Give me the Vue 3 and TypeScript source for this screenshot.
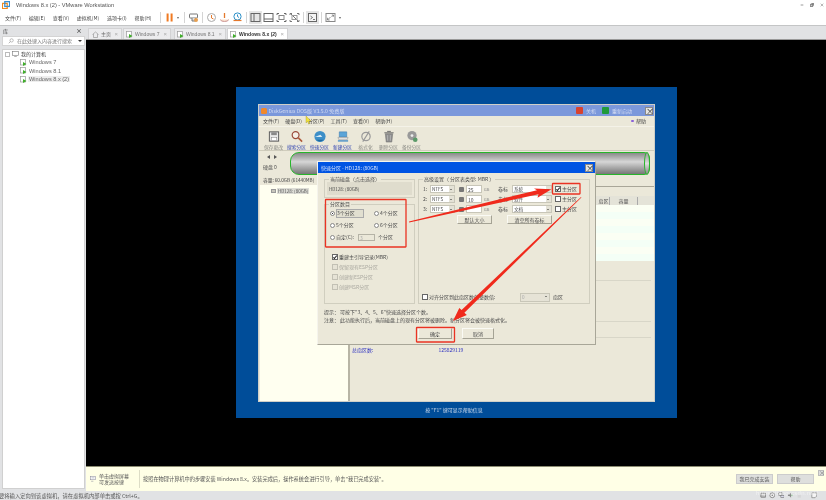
<script setup lang="ts">
const menus = ['文件(F)', '编辑(E)', '查看(V)', '虚拟机(M)', '选项卡(I)', '帮助(H)']
const vmNames = ['Windows 7', 'Windows 8.1', 'Windows 8.x (2)']
const dgMenus = ['文件(F)', '硬盘(D)', '分区(P)', '工具(T)', '查看(V)', '帮助(H)']
const dgTools = [
  { label: '保存更改', kind: 'save', on: false },
  { label: '搜索分区', kind: 'search', on: true },
  { label: '快速分区', kind: 'quick', on: true },
  { label: '新建分区', kind: 'new', on: true },
  { label: '格式化', kind: 'format', on: false },
  { label: '删除分区', kind: 'del', on: false },
  { label: '备份分区', kind: 'backup', on: false },
]
const radios = ['3个分区', '4个分区', '5个分区', '6个分区']
const disabledChecks = ['保留现有ESP分区', '创建新ESP分区', '创建MSR分区']
const partRows = [
  { n: '1:', size: '25', label: '系统', checked: true },
  { n: '2:', size: '10', label: '软件', checked: false },
  { n: '3:', size: '', label: '文档', checked: false },
]
const tableRows = [0, 1, 2, 3, 4, 5, 6, 7]
</script>

<template>
  <div class="app">
    <header class="titlebar">
      <svg class="logo" viewBox="0 0 10 10">
        <rect x="0.5" y="3" width="6" height="6.5" fill="none" stroke="#f08a1d" stroke-width="1.6" />
        <rect x="3.5" y="0.8" width="6" height="6" fill="none" stroke="#3a8fd0" stroke-width="1.6" />
      </svg>
      <span class="app-title">Windows 8.x (2) - VMware Workstation</span>
      <div class="winctl">
        <svg viewBox="0 0 6 6"><path d="M1 3h4" stroke="#666" stroke-width="1" /></svg>
        <svg viewBox="0 0 6 6"><path d="M2 .5h3.5v3.5M.5 2h3.5v3.5H.5z" fill="#ccc" stroke="#444" stroke-width=".9" /></svg>
        <svg viewBox="0 0 6 6"><path d="M1 1l4 4M5 1L1 5" stroke="#888" stroke-width=".9" /></svg>
      </div>
    </header>

    <div class="menubar">
      <nav class="menus"><span v-for="m in menus" :key="m">{{ m }}</span></nav>
      <div class="tools">
        <i class="sep"></i>
        <span class="ti"><svg viewBox="0 0 13 13"><path d="M3.6 2.5h2v8h-2zM7.6 2.5h2v8h-2z" fill="#f07a22" /></svg></span>
        <span class="caret pause-caret"></span>
        <i class="sep"></i>
        <span class="ti"><svg viewBox="0 0 13 13"><rect x="2.5" y="3" width="8" height="4" rx=".5" fill="#fff" stroke="#777" /><path d="M5 7v3h3.500V7" fill="#ddd" stroke="#777" /><circle cx="9" cy="9" r="2" fill="#e8a050" /></svg></span>
        <i class="sep"></i>
        <span class="ti"><svg viewBox="0 0 13 13"><circle cx="6.500" cy="6.500" r="4" fill="#fff" stroke="#aaa" /><path d="M6.500 4v3l2 1" fill="none" stroke="#e4782c" /></svg></span>
        <span class="ti"><svg viewBox="0 0 13 13"><path d="M6.500 2v5" stroke="#e4782c" stroke-width="1.300" /><path d="M2.500 8.500a4 2 0 0 0 8 0" fill="#fbe0cc" stroke="#c99" /></svg></span>
        <span class="ti"><svg viewBox="0 0 13 13"><circle cx="6.500" cy="5.500" r="3.600" fill="#fff" stroke="#2a8fc8" /><path d="M6.500 3.500v2l1.500 1" fill="none" stroke="#2a8fc8" /><path d="M2.500 9.500h8" stroke="#e4782c" stroke-width="1.200" /></svg></span>
        <i class="sep"></i>
        <span class="ti hl"><svg viewBox="0 0 13 13"><rect x="2" y="2.500" width="9" height="8" fill="none" stroke="#666" /><path d="M5 2.500v8" stroke="#666" /></svg></span>
        <span class="ti"><svg viewBox="0 0 13 13"><rect x="2" y="2.500" width="9" height="8" fill="none" stroke="#666" /><path d="M2 8h9" stroke="#666" /></svg></span>
        <span class="ti"><svg viewBox="0 0 13 13"><path d="M2 4V2.500h2M9 2.500h2V4M11 9v1.500H9M4 10.500H2V9" fill="none" stroke="#666" /><rect x="4" y="4.500" width="5" height="4" fill="none" stroke="#888" /></svg></span>
        <span class="ti"><svg viewBox="0 0 13 13"><path d="M2 4V2.500h2M9 2.500h2V4M11 9v1.500H9M4 10.500H2V9M3 3l7 7" fill="none" stroke="#777" /><rect x="4" y="4.500" width="5" height="4" fill="none" stroke="#999" /></svg></span>
        <i class="sep"></i>
        <span class="ti hl"><svg viewBox="0 0 13 13"><rect x="2.500" y="2.500" width="8" height="8" fill="#f4f4f4" stroke="#666" /><path d="M4.500 5l2 1.500-2 1.500M7 8.500h2" fill="none" stroke="#555" stroke-width=".8" /></svg></span>
        <i class="sep"></i>
        <span class="ti"><svg viewBox="0 0 13 13"><rect x="2" y="2.500" width="9" height="8" fill="#fff" stroke="#888" /><path d="M3.500 9l3-3M3.500 6.800V9h2.200M9.500 4l-2 2M7.800 4h1.700v1.700" fill="none" stroke="#777" stroke-width=".8" /></svg></span>
        <span class="caret"></span>
      </div>
    </div>

    <div class="workspace">
      <aside class="library">
        <div class="lib-head"><span>库</span><span class="lib-x">×</span></div>
        <div class="search">
          <svg viewBox="0 0 8 8"><circle cx="4.800" cy="3.200" r="2.200" fill="none" stroke="#888" stroke-width=".7" /><path d="M3.200 4.800L1 7" stroke="#888" stroke-width=".8" /></svg>
          <span>在此处键入内容进行搜索</span>
          <i class="search-caret"></i>
        </div>
        <div class="tree">
          <div class="tree-root">
            <i class="expander"></i>
            <svg class="pc" viewBox="0 0 8 7"><rect x=".5" y=".5" width="7" height="4.500" fill="#fff" stroke="#777" stroke-width=".7" /><path d="M2.500 6.500h3" stroke="#777" stroke-width=".7" /></svg>
            <span>我的计算机</span>
          </div>
          <div v-for="(v, i) in vmNames" :key="v" class="tree-vm" :class="{ current: i === 2 }">
            <svg class="vm-ico" viewBox="0 0 7 7"><rect x=".5" y=".5" width="5" height="5.500" fill="#fff" stroke="#999" stroke-width=".7" /><path d="M3 3l3.500 2L3 7z" fill="#3fae2a" /></svg>
            <span>{{ v }}</span>
          </div>
        </div>
      </aside>

      <section class="main">
        <div class="tabs">
          <div class="tab home">
            <svg viewBox="0 0 7 7"><path d="M.5 3.500L3.500 1l3 2.500M1.500 3v3.500h4V3" fill="none" stroke="#999" stroke-width=".7" /></svg>
            <span>主页</span><b>×</b>
          </div>
          <div v-for="(v, i) in vmNames" :key="v" class="tab" :class="{ active: i === 2, w7: i === 0, w81: i === 1, w8x: i === 2 }">
            <svg viewBox="0 0 7 7"><rect x=".5" y=".5" width="5" height="5.500" fill="#fff" stroke="#999" stroke-width=".7" /><path d="M3 3l3.500 2L3 7z" fill="#3fae2a" /></svg>
            <span>{{ v }}</span><b>×</b>
          </div>
        </div>

        <div class="stage">
          <div class="guest">
            <div class="dg">
              <div class="dg-title">
                <i class="dg-logo"></i>
                <span class="dg-name">DiskGenius DOS版 V3.5.0 免费版</span>
                <i class="pw red"></i><span class="pw-text">关机</span>
                <i class="pw green"></i><span class="pw-text">重新启动</span>
                <span class="x-box dg-x">×</span>
              </div>
              <div class="dg-menu">
                <span v-for="m in dgMenus" :key="m">{{ m }}</span>
                <span class="dg-help"><i></i>帮助</span>
              </div>
              <div class="dg-tools">
                <div v-for="t in dgTools" :key="t.label" class="dg-tool" :class="{ on: t.on }">
                  <svg viewBox="0 0 14 14">
                    <g v-if="t.kind === 'save'"><rect x="2" y="2" width="10" height="10" fill="#e8e8e8" stroke="#555" /><rect x="4" y="2.500" width="6" height="3" fill="#888" /><rect x="4" y="8" width="6" height="3.500" fill="#fff" stroke="#777" stroke-width=".5" /></g>
                    <g v-else-if="t.kind === 'search'"><circle cx="5.500" cy="5.500" r="3.700" fill="#f4efe6" stroke="#9a4a3a" stroke-width="1.300" /><path d="M8.500 8.500l4 4" stroke="#b05a3a" stroke-width="1.700" /></g>
                    <g v-else-if="t.kind === 'quick'"><circle cx="7" cy="7" r="6" fill="#3d8fc8" /><path d="M1.500 7.500h8l-2-2.500z" fill="#d6eaf5" /><path d="M3 10.500a6 6 0 0 0 8 0z" fill="#1f6aa0" /></g>
                    <g v-else-if="t.kind === 'new'"><path d="M3 2h8v5.500H3z" fill="#5aa4d8" stroke="#3a7bb0" stroke-width=".6" /><path d="M1.500 8h11l-1 2.500h-9z" fill="#e0e0e0" stroke="#888" stroke-width=".5" /><path d="M1.500 11h11v1.500h-11z" fill="#4a90c8" /></g>
                    <g v-else-if="t.kind === 'format'"><circle cx="7" cy="7" r="4.500" fill="none" stroke="#999" stroke-width="1.300" /><path d="M10.500 1.500L3.500 12.500" stroke="#999" stroke-width="1.200" /></g>
                    <g v-else-if="t.kind === 'del'"><path d="M3 4h8l-1 9H4z" fill="#8f8f8f" stroke="#666" stroke-width=".5" /><path d="M2 3h10M5 1.500h4" stroke="#666" /><path d="M5.500 5.500v6M8.500 5.500v6" stroke="#ccc" stroke-width=".6" /></g>
                    <g v-else><circle cx="7" cy="6" r="5" fill="#999" /><circle cx="7" cy="6" r="1.500" fill="#eee" /><circle cx="10.500" cy="10.500" r="2.500" fill="#5a9a68" /></g>
                  </svg>
                  <span>{{ t.label }}</span>
                </div>
              </div>
              <div class="diskrow">
                <div class="disk-nav">
                  <div class="arrows"><i class="al"></i><i class="ar"></i></div>
                  <span>硬盘 0</span>
                </div>
                <div class="cyl"><i class="cyl-end"></i></div>
              </div>
              <div class="capacity">容量: 60.0GB (61440MB)</div>
              <div class="dg-body">
                <div class="disk-tree">
                  <div class="tree-item"><i class="hd-ico"></i><span>HD128: (80GB)</span></div>
                </div>
                <div class="detail">
                  <div class="rule dark"></div>
                  <div class="th"><span class="c1">扇区</span><span class="c2">容量</span><span class="c3"></span></div>
                  <div class="tb"><div v-for="r in tableRows" :key="r" class="tr"></div></div>
                  <div class="rule l1"></div>
                  <div class="rule l2"></div>
                  <div class="rule l3"></div>
                  <div class="info"><span>总扇区数:</span><span class="val">125829119</span></div>
                </div>
              </div>

              <div class="dialog">
                <div class="dlg-title"><span>快速分区 - HD128: (80GB)</span><span class="x-box">×</span></div>
                <div class="dlg-cols">
                  <div class="dlg-left">
                    <fieldset class="fs fs-disk">
                      <legend>当前磁盘（点击选择）</legend>
                      <div class="disk-pick">HD128: (80GB)</div>
                    </fieldset>
                    <fieldset class="fs fs-count">
                      <legend>分区数目</legend>
                      <div class="radios">
                        <label v-for="(r, i) in radios" :key="r" class="radio" :class="{ sel: i === 0 }"><i></i><span>{{ r }}</span></label>
                        <label class="radio custom"><i></i><span>自定(C):</span><em class="spin">3</em><span>个分区</span></label>
                      </div>
                      <div class="checks">
                        <label class="chk"><i class="box ticked"></i><span>重建主引导记录(MBR)</span></label>
                        <label v-for="c in disabledChecks" :key="c" class="chk off"><i class="box"></i><span>{{ c }}</span></label>
                      </div>
                    </fieldset>
                  </div>
                  <fieldset class="fs fs-adv">
                    <legend>高级设置（ 分区表类型: MBR ）</legend>
                    <div class="adv">
                      <div v-for="p in partRows" :key="p.n" class="prow">
                        <span class="pnum">{{ p.n }}</span>
                        <span class="select">NTFS<i></i></span>
                        <span class="sz-ico"></span>
                        <span class="field sz">{{ p.size }}</span>
                        <span class="gb">GB</span>
                        <span class="lbl">卷标</span>
                        <span class="select combo">{{ p.label }}<i></i></span>
                        <i class="box pchk" :class="{ ticked: p.checked }"></i>
                        <span class="ptext">主分区</span>
                      </div>
                      <div class="adv-btns">
                        <span class="btn b-def">默认大小</span>
                        <span class="btn b-clr">清空所有卷标</span>
                      </div>
                      <div class="align">
                        <i class="box"></i>
                        <span class="align-t">对齐分区到此扇区数的整数倍:</span>
                        <span class="select a-sel dim">0<i></i></span>
                        <span>扇区</span>
                      </div>
                    </div>
                  </fieldset>
                </div>
                <p class="tip">提示： 可按下"3、4、5、6"快速选择分区个数。</p>
                <p class="tip">注意： 此功能执行后，当前磁盘上的现有分区将被删除。新分区将会被快速格式化。</p>
                <div class="dlg-btns">
                  <span class="btn ok">确定</span>
                  <span class="btn cancel">取消</span>
                </div>
              </div>
            </div>
            <div class="f1">按 "F1" 键可显示帮助信息</div>
          </div>
        </div>

        <div class="hint">
          <svg class="hint-ico" viewBox="0 0 8 8"><rect x=".5" y=".5" width="7" height="4.500" fill="#fff" stroke="#889" stroke-width=".7" /><path d="M1.500 7h3M2 2.500h4" stroke="#889" stroke-width=".7" /></svg>
          <div class="hint-a">单击虚拟屏幕<br />可发送按键</div>
          <i class="hint-div"></i>
          <div class="hint-b">按照在物理计算机中的步骤安装 Windows 8.x。安装完成后，操作系统会进行引导，单击"我已完成安装"。</div>
          <span class="hbtn first">我已完成安装</span>
          <span class="hbtn second">帮助</span>
          <span class="hclose">×</span>
        </div>
      </section>
    </div>

    <footer class="status">
      <span>要将输入定向到该虚拟机，请在虚拟机内部单击或按 Ctrl+G。</span>
      <div class="st-icons">
        <svg viewBox="0 0 8 8"><rect x="1" y="1.500" width="6" height="5" rx=".5" fill="#ddd" stroke="#666" stroke-width=".8" /><path d="M1 5h6" stroke="#666" stroke-width=".6" /></svg>
        <svg viewBox="0 0 8 8"><circle cx="4" cy="4" r="3" fill="#eee" stroke="#666" stroke-width=".8" /><circle cx="4" cy="4" r=".8" fill="#666" /></svg>
        <svg viewBox="0 0 8 8"><rect x="1" y="1" width="4" height="3" fill="#eee" stroke="#666" stroke-width=".7" /><rect x="3.500" y="4" width="4" height="3" fill="#dde" stroke="#666" stroke-width=".7" /></svg>
        <svg viewBox="0 0 8 8"><path d="M1 3h2l2-2v6L3 5H1z" fill="#888" /><path d="M6 3v2" stroke="#5a5" stroke-width=".8" /></svg>
        <svg class="faint" viewBox="0 0 8 8"><path d="M2 7V3h4v4z" fill="#ccc" /></svg>
        <svg class="last" viewBox="0 0 8 8"><path d="M1 1h6v4L5 7H1z" fill="#f4f4f4" stroke="#666" stroke-width=".7" /></svg>
      </div>
    </footer>

    <div class="watermark">https://blog.csdn.net/</div>

    <svg class="overlay" viewBox="0 0 826 500">
      <g fill="none" stroke="#ea3323" stroke-width="1.300">
        <rect x="325.500" y="199.500" width="80.500" height="47.500" rx=".5" />
        <rect x="552.500" y="183.500" width="27.500" height="10.500" rx=".5" />
        <rect x="416.500" y="327.500" width="38" height="14.500" rx=".5" />
      </g>
      <path fill="#f02a1c" d="M409 221.600L537 190.200 534 188.600 551.500 189.200 537.500 197.800 538.500 194.200 409.200 222.500Z" />
      <path fill="#f02a1c" d="M581 197L581.400 197.400 464.400 312.700 466.800 315 453 321 459.300 308 461.600 309.900Z" />
      <path d="M306 116l0 7 1.600-1.500 1.200 2.500 1-.5-1.100-2.400 2.300-.1z" fill="#f0e23c" stroke="#8a7a20" stroke-width=".3" />
    </svg>
  </div>
</template>

<style scoped>
.app {
  position: relative;
  width: 826px;
  height: 500px;
  overflow: hidden;
  display: flex;
  flex-direction: column;
  background: #e1e2e4;
  font-family: "Noto Sans CJK SC", "Liberation Sans", sans-serif;
  font-size: 5px;
  line-height: 6px;
  color: #444;
  filter: blur(0.3px);
}
i, em { font-style: normal; display: block; }
label { display: flex; align-items: center; }
p { margin: 0; }

.titlebar {
  height: 10px;
  background: #fff;
  display: flex;
  align-items: center;
  padding-left: 2px;
  flex: none;
}
.logo { width: 8px; height: 8px; }
.app-title {
  margin-left: 6px;
  font-family: "Liberation Sans", sans-serif;
  font-size: 5.7px;
  color: #555;
}
.winctl { margin-left: auto; display: flex; gap: 6px; padding-right: 2px; }
.winctl svg { width: 4px; height: 4px; }

.menubar {
  height: 15px;
  background: #fff;
  border-bottom: 1px solid #c4c5c6;
  display: flex;
  align-items: center;
  flex: none;
}
.menus { width: 158px; padding-left: 5px; display: flex; gap: 7.7px; box-sizing: border-box; color: #444; }
.tools { display: flex; align-items: center; height: 13px; }
.sep { width: 1px; height: 11px; background: #d4d4d4; margin: 0 2px; }
.ti { width: 13px; height: 13px; display: block; }
.ti svg { width: 13px; height: 13px; display: block; }
.ti.hl { background: #e6e6e6; }
.caret {
  width: 0; height: 0;
  border-left: 1.500px solid transparent;
  border-right: 1.500px solid transparent;
  border-top: 2px solid #666;
  margin: 0 1.500px;
}
.pause-caret { margin: 0 3.500px 0 .5px; }

.workspace { flex: 1; display: flex; min-height: 0; }
.library { width: 86px; flex: none; padding: 0 1px 2px 2px; box-sizing: border-box; display: flex; flex-direction: column; }
.lib-head { height: 10px; display: flex; align-items: center; justify-content: space-between; padding: 0 3px 0 1px; }
.lib-x { font-size: 6px; font-weight: 700; color: #555; }
.search {
  height: 10px;
  background: #fff;
  border: 1px solid #d4d4d4;
  box-sizing: border-box;
  display: flex;
  align-items: center;
  padding: 0 2px 0 5px;
  color: #777;
}
.search svg { width: 6px; height: 6px; margin-right: 3px; }
.search-caret {
  margin-left: auto;
  border-left: 2px solid transparent;
  border-right: 2px solid transparent;
  border-top: 2.500px solid #333;
}
.tree {
  flex: 1;
  margin-top: 3px;
  background: #fff;
  border: 1px solid #d0d0d0;
}
.tree-root { height: 8px; display: flex; align-items: center; padding-left: 2px; }
.expander { width: 3px; height: 3px; border: 1px solid #bbb; margin-right: 2px; }
.pc { width: 7px; height: 6px; margin-right: 2px; }
.tree-vm { height: 8.600px; display: flex; align-items: center; padding-left: 17px; color: #666; font-family: "Liberation Sans", sans-serif; font-size: 5.600px; }
.tree-vm span { padding: 0 1px; }
.tree-vm.current span { background: #eee; }
.vm-ico { width: 7px; height: 7px; margin-right: 1px; }

.main { flex: 1; min-width: 0; display: flex; flex-direction: column; }
.tabs {
  height: 14px;
  flex: none;
  display: flex;
  align-items: flex-end;
  padding-left: 2px;
  gap: 1px;
  box-sizing: border-box;
  border-bottom: 1px solid #999;
}
.tab {
  height: 11px;
  background: #ececee;
  border: 1px solid #d2d2d4;
  border-bottom: 0;
  box-sizing: border-box;
  display: flex;
  align-items: center;
  padding: 0 2px 0 2px;
  font-family: "Liberation Sans", "Noto Sans CJK SC", sans-serif;
  font-size: 5px;
  color: #777;
}
.tab svg { width: 7px; height: 7px; margin-right: 2px; flex: none; }
.tab b { margin-left: auto; margin-right: 1px; font-size: 6px; font-weight: 400; color: #aaa; }
.tab.home { width: 34px; color: #666; padding-left: 3px; }
.tab.w7 { width: 48px; }
.tab.w81 { width: 52px; margin-left: 2px; }
.tab.w8x { width: 61px; }
.tab.active { background: #fff; color: #333; font-weight: 700; }
.tab.active b { font-weight: 400; }

.stage { flex: 1; min-height: 0; background: #000; padding: 47px 0 0 150px; box-sizing: border-box; }
.guest {
  width: 441px;
  height: 331px;
  background: #004d99;
  padding: 17px 22px 0;
  box-sizing: border-box;
  color: #555;
}
.f1 { text-align: center; color: #cfdcec; margin-top: 5px; padding-right: 5px; }

.dg {
  position: relative;
  height: 298px;
  background: #ebe8d9;
  border: 1px solid #cfcfc8;
  box-sizing: border-box;
  display: flex;
  flex-direction: column;
}
.dg-title {
  height: 11px;
  flex: none;
  background: #7b98db;
  display: flex;
  align-items: center;
  padding-left: 2px;
  color: #d4dcf2;
}
.dg-logo { width: 6px; height: 6px; border-radius: 1.500px; background: #f0882a; margin-right: 1.500px; }
.dg-name { letter-spacing: .1px; }
.pw { width: 7px; height: 7px; border-radius: 1px; margin-right: 3px; }
.pw.red { background: #d8432f; margin-left: auto; }
.pw.green { background: #1f9a3a; margin-left: 6px; }
.pw-text { color: #d4dcf2; }
.x-box {
  width: 8px;
  height: 8px;
  border: 1px solid #888;
  box-sizing: border-box;
  background: #e6e6e2;
  color: #222;
  font-size: 8px;
  line-height: 5px;
  text-align: center;
  display: block;
}
.dg-x { margin-left: 13px; margin-right: 1px; }
.dg-menu { height: 10px; flex: none; display: flex; align-items: center; padding-left: 4px; gap: 6px; color: #444; }
.dg-help { margin-left: auto; margin-right: 8px; display: flex; align-items: center; gap: 2px; }
.dg-help i { width: 2.500px; height: 2.500px; border-radius: 50%; background: #8a60d8; }
.dg-tools {
  height: 25px;
  flex: none;
  box-sizing: border-box;
  border-top: 1px solid #f4f2e8;
  border-bottom: 1px solid #cfccbc;
  display: flex;
  padding-left: 3px;
}
.dg-tool { width: 23px; display: flex; flex-direction: column; align-items: center; padding-top: 3px; color: #8a8a84; font-size: 4.800px; }
.dg-tool svg { width: 14px; height: 14px; }
.dg-tool span { margin-top: 1px; white-space: nowrap; }
.dg-tool.on { color: #2b3fb0; }
.diskrow { height: 24px; flex: none; display: flex; padding-top: 1px; box-sizing: border-box; }
.disk-nav { width: 31px; padding-left: 4px; box-sizing: border-box; flex: none; }
.arrows { display: flex; gap: 4px; height: 9px; padding: 2.500px 0 0 4px; box-sizing: border-box; }
.arrows i { width: 0; height: 0; border-top: 2.500px solid transparent; border-bottom: 2.500px solid transparent; }
.al { border-right: 3px solid #555; }
.ar { border-left: 3px solid #555; }
.disk-nav span { display: block; margin-top: 3px; }
.cyl {
  position: relative;
  width: 360px;
  height: 23px;
  box-sizing: border-box;
  border: 1.300px solid #27b52a;
  border-radius: 9px 6px 6px 9px;
  background: linear-gradient(#8a8a8a, #d6d6d6 42%, #a8a8a8 70%, #777);
}
.cyl-end {
  position: absolute;
  right: -1px;
  top: -1px;
  width: 6px;
  height: 23px;
  box-sizing: border-box;
  border: 1.300px solid #27b52a;
  border-radius: 50%;
  background: linear-gradient(#999, #ddd 50%, #888);
}
.capacity { height: 10px; flex: none; padding-left: 4px; display: flex; align-items: center; color: #444; font-size: 4.700px; }
.dg-body { flex: 1; min-height: 0; display: flex; }
.disk-tree {
  width: 88px;
  flex: none;
  margin-left: 1px;
  background: #fffff0;
  border-right: 2px solid #b8b5a5;
  padding-top: 3px;
}
.tree-item { margin-left: 11px; height: 6px; display: flex; align-items: center; color: #555; font-size: 4.500px; }
.hd-ico { width: 5px; height: 4px; background: #c8c6bc; border: .5px solid #999; box-sizing: border-box; margin-right: 1px; flex: none; }
.tree-item span { background: #ddddd6; padding: 0 1px; white-space: nowrap; }
.detail { flex: 1; min-width: 0; display: flex; flex-direction: column; padding-top: 1px; }
.rule { height: 1px; background: #d8d6c8; flex: none; margin-right: 3px; }
.rule.dark { background: #a9a698; margin-right: 0; height: 1px; }
.th {
  margin-top: 9px;
  height: 9px;
  flex: none;
  background: #e4e3d8;
  display: flex;
  justify-content: flex-end;
  align-items: center;
  color: #555;
}
.th span { height: 8px; display: flex; align-items: center; justify-content: center; box-sizing: border-box; }
.c1 { width: 12px; border-right: 1px solid #aaa; }
.c2 { width: 28px; border-right: 1px solid #aaa; }
.c3 { width: 16px; }
.tr { height: 7px; background: #fbfff4; }
.tr:nth-child(even) { background: #f4fff6; }
.rule.l1 { margin-top: 19px; }
.rule.l2 { margin-top: 40px; }
.rule.l3 { margin-top: 15px; }
.info { margin-top: 9px; padding-left: 2px; color: #2b2fc0; display: flex; }
.val { margin-left: 65px; }

.dialog {
  position: absolute;
  left: 58px;
  top: 56px;
  width: 279px;
  height: 184px;
  box-sizing: border-box;
  background: #ebe8d9;
  border: 1px solid #f5f4ec;
  border-right-color: #a8a698;
  border-bottom-color: #a8a698;
  padding: 0 5px 0 6px;
  color: #4a4a4a;
}
.dlg-title {
  height: 11px;
  margin: 0 -5px 0 -6px;
  background: #0054e3;
  color: #d8e4fb;
  display: flex;
  align-items: center;
  justify-content: space-between;
  padding: 0 2px 0 3px;
}
.dlg-cols { display: flex; gap: 3px; padding-top: 3px; }
.dlg-left { width: 91px; flex: none; }
.fs { margin: 0; padding: 0; min-width: 0; border: 1px solid #d0cebf; box-sizing: border-box; }
.fs legend { margin-left: 4px; padding: 0 1px; line-height: 6px; }
.fs-disk { height: 22px; }
.disk-pick { margin: 0 2px; height: 13px; background: #dfdccd; display: flex; align-items: center; padding-left: 2px; font-size: 4.500px; }
.fs-count { height: 103px; margin-top: 3px; }
.radios { display: grid; grid-template-columns: 44px 44px; grid-auto-rows: 12px; padding-left: 5px; }
.radio i { width: 5px; height: 5px; border-radius: 50%; border: .7px solid #888; background: #fff; box-sizing: border-box; margin-right: 1px; flex: none; }
.radio.sel i { background: radial-gradient(circle, #333 35%, #fff 40%); }
.radio.sel span { border: .5px solid #aaa; padding: 0 8px 0 0; background: #e1dfd0; height: 7px; display: flex; align-items: center; margin-left: 0; }
.custom { grid-column: 1 / 3; }
.spin {
  width: 17px;
  height: 7px;
  margin: 0 3px 0 4px;
  border: .7px solid #b5b3a6;
  box-sizing: border-box;
  color: #aaa;
  padding-left: 1px;
  line-height: 5px;
}
.checks { margin-top: 9px; padding-left: 7px; }
.chk { height: 10px; }
.box {
  width: 5.500px;
  height: 5.500px;
  border: .8px solid #666;
  background: #fff;
  box-sizing: border-box;
  margin-right: 1.500px;
  flex: none;
  position: relative;
}
.box.ticked::after {
  content: "";
  position: absolute;
  left: 1.200px;
  top: -.2px;
  width: 1.300px;
  height: 3px;
  border: solid #222;
  border-width: 0 .9px .9px 0;
  transform: rotate(40deg);
}
.chk.off { color: #aaa8a0; }
.chk.off .box { border-color: #c2c0b4; background: #e6e3d6; }
.fs-adv { width: 172px; height: 128px; flex: none; }
.adv { height: 121px; display: flex; flex-direction: column; padding: 2px 0 0 4px; box-sizing: border-box; }
.prow { height: 10px; display: flex; align-items: center; flex: none; }
.pnum { width: 7px; flex: none; }
.select {
  position: relative;
  width: 25px;
  height: 8px;
  flex: none;
  background: #fff;
  border: .5px solid #c8c6b8;
  box-sizing: border-box;
  padding-left: 1px;
  line-height: 7px;
  font-size: 4.600px;
}
.select i { position: absolute; right: 0; top: 0; bottom: 0; width: 5px; background: #e4e2d6; }
.select i::after {
  content: "";
  position: absolute;
  left: 1.200px;
  top: 2.500px;
  border-left: 1.300px solid transparent;
  border-right: 1.300px solid transparent;
  border-top: 1.600px solid #222;
}
.sz-ico { width: 5px; height: 5px; margin-left: 4px; background: #777; flex: none; border-radius: 1px; }
.field {
  width: 16px;
  height: 8px;
  margin-left: 2px;
  background: #fff;
  border: .5px solid #c8c6b8;
  box-sizing: border-box;
  padding-left: 1px;
  line-height: 7px;
  flex: none;
}
.gb { width: 6px; margin-left: 2px; flex: none; color: #888; font-size: 4px; }
.lbl { width: 13px; margin-left: 8px; flex: none; }
.combo { width: 40px; margin-left: 1px; }
.pchk { margin: 0 1.500px 0 3px; }
.adv-btns { display: flex; margin-top: 1px; padding-left: 34px; }
.btn {
  display: flex;
  align-items: center;
  justify-content: center;
  box-sizing: border-box;
  background: #ebe8d9;
  border: 1px solid;
  border-color: #fafaf4 #a5a395 #a5a395 #fafaf4;
  flex: none;
}
.b-def { width: 35px; height: 9px; }
.b-clr { width: 45px; height: 9px; margin-left: 15px; }
.align { margin-top: auto; height: 10px; flex: none; display: flex; align-items: center; margin-left: -1px; padding-bottom: 1px; }
.align-t { width: 91px; flex: none; }
.a-sel { width: 30px; height: 9px; margin-right: 3px; background: #e6e3d6; color: #aaa; }
.tip { margin-top: 0; height: 8px; line-height: 8px; white-space: nowrap; }
.tip:first-of-type { margin-top: 4px; }
.dlg-btns { display: flex; margin-top: 4px; padding-left: 94px; }
.ok { width: 34px; height: 11px; }
.cancel { width: 32px; height: 11px; margin-left: 10px; }

.hint {
  height: 25px;
  flex: none;
  background: #ffffe6;
  border-top: 1px solid #8c8c72;
  box-sizing: border-box;
  display: flex;
  align-items: center;
  padding-left: 4px;
  color: #555;
  position: relative;
}
.hint-ico { width: 6px; height: 6px; }
.hint-a { margin-left: 3px; width: 40px; flex: none; line-height: 6px; }
.hint-div { width: 1px; height: 18px; background: #ddddc6; flex: none; }
.hint-b { margin-left: 3px; white-space: nowrap; font-size: 5.200px; }
.hbtn {
  width: 37px;
  height: 10px;
  background: #dedfdd;
  border: .5px solid #ccc;
  box-sizing: border-box;
  display: flex;
  align-items: center;
  justify-content: center;
  margin-left: 4px;
  flex: none;
}
.hbtn.first { margin-left: auto; }
.hbtn.second { margin-right: 12px; }
.hclose {
  position: absolute;
  right: 2px;
  top: 3px;
  width: 6px;
  height: 6px;
  background: #ddd;
  border: .5px solid #bbb;
  box-sizing: border-box;
  font-size: 6px;
  line-height: 4px;
  text-align: center;
  color: #777;
}

.status { height: 9px; flex: none; background: #e1e2e4; display: flex; align-items: center; position: relative; color: #555; font-size: 5.300px; }
.status > span { margin-left: -1px; }
.st-icons { margin-left: auto; display: flex; gap: 2.500px; padding-right: 9px; }
.st-icons svg { width: 6.500px; height: 6.500px; }
.st-icons .faint { opacity: .5; }
.st-icons .last { margin-left: 6px; }
.watermark {
  position: absolute;
  right: 8px;
  bottom: 4px;
  font-family: "Liberation Sans", sans-serif;
  font-size: 6px;
  color: rgba(255, 255, 255, .55);
  letter-spacing: .3px;
}
.overlay { position: absolute; left: 0; top: 0; width: 826px; height: 500px; pointer-events: none; }
</style>
